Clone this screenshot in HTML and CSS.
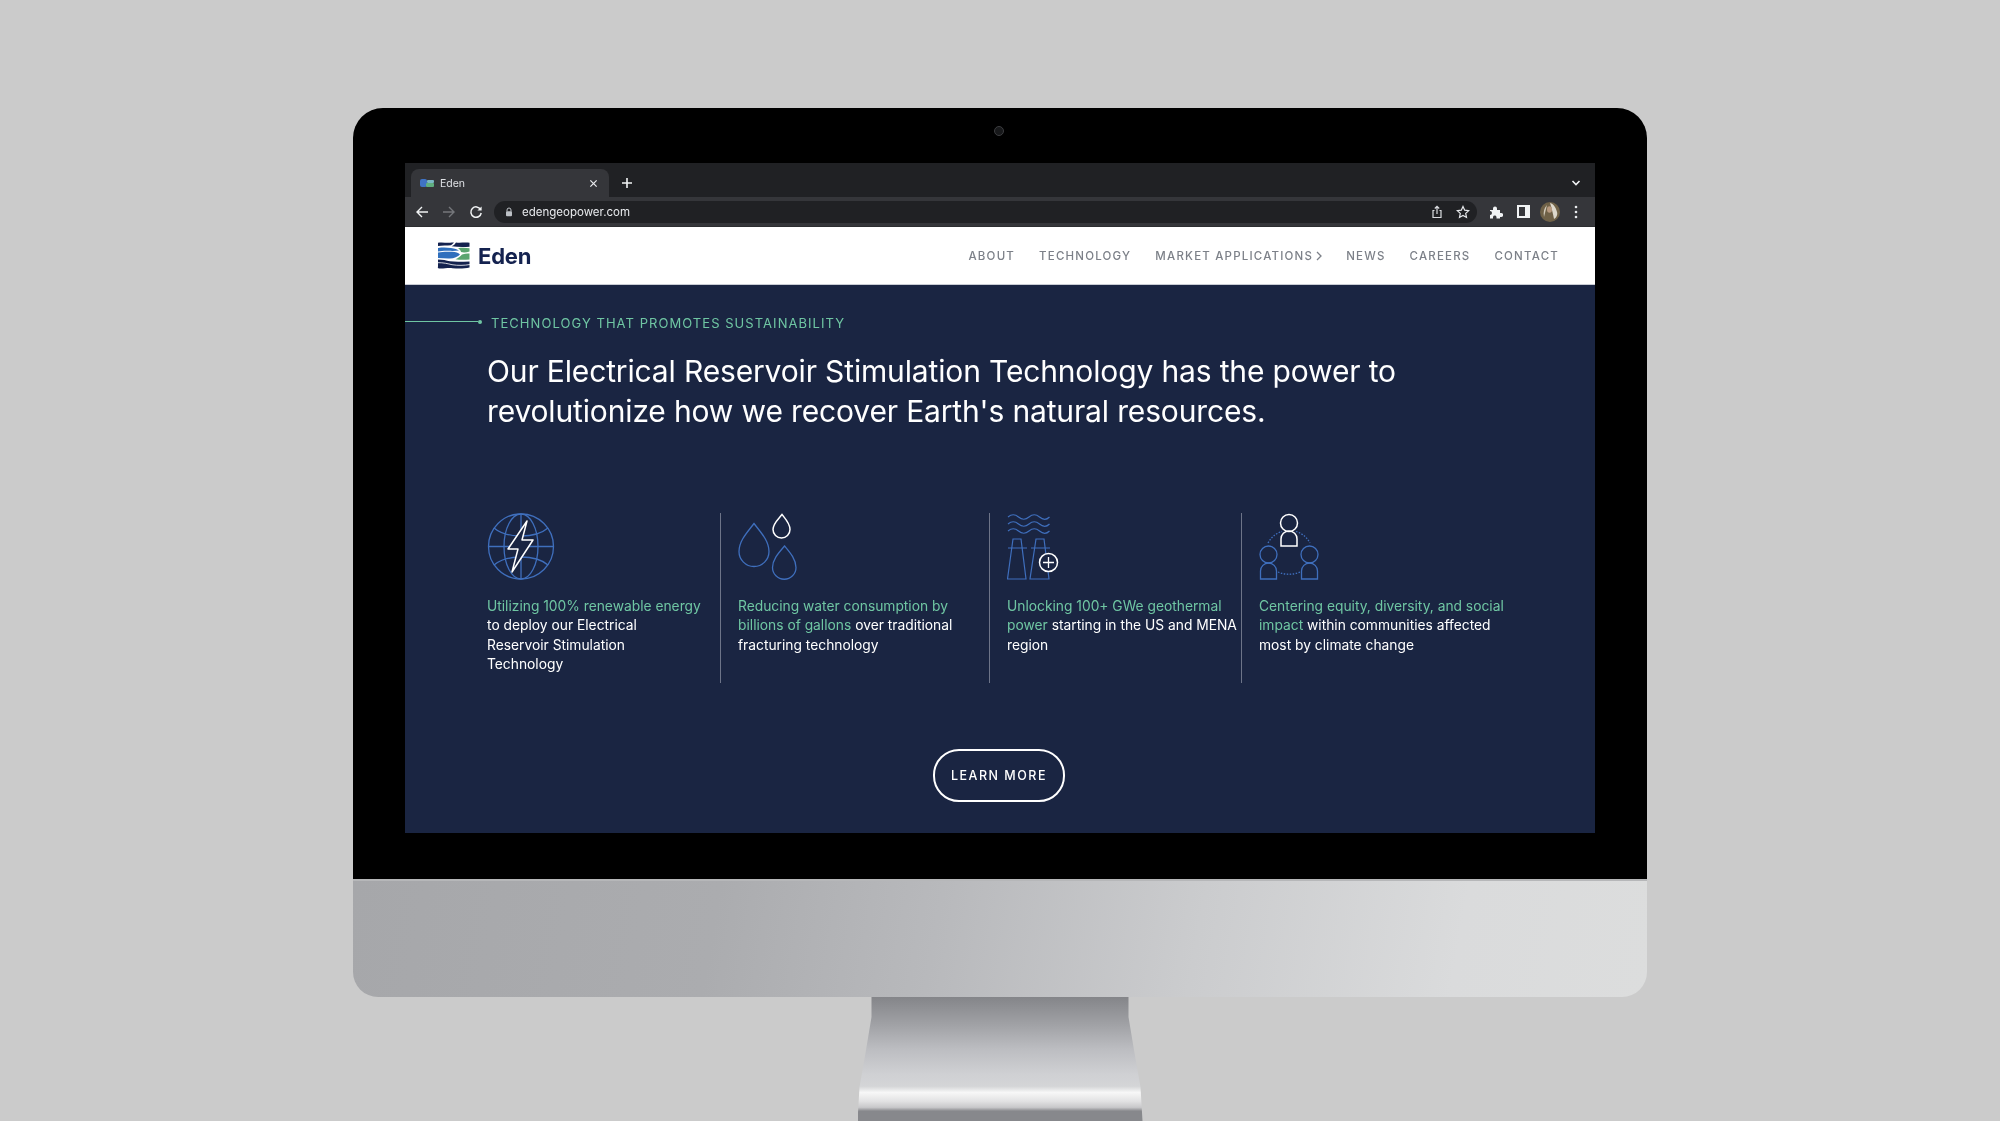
FILE: index.html
```html
<!DOCTYPE html>
<html lang="en">
<head>
<meta charset="utf-8">
<title>Eden</title>
<link rel="stylesheet" href="styles.css">
</head>
<body>
<div class="monitor">
  <div class="bezel">
    <div class="camera"></div>
    <div class="screen">
      <div class="tabstrip">
        <div class="tab">
          <svg class="favicon" viewBox="0 0 14 10"><rect x="0" y="1" width="7" height="8" rx="2" fill="#3f73c4"/><rect x="7" y="2" width="7" height="3" rx="1" fill="#7ab8c4"/><rect x="6" y="5" width="8" height="4" rx="1" fill="#5fae7f"/></svg>
          <span class="tab-title">Eden</span>
          <svg class="tab-close" viewBox="0 0 10 10"><path d="M1.5 1.5l7 7M8.5 1.5l-7 7" stroke="#e8eaed" stroke-width="1.4" fill="none"/></svg>
        </div>
        <svg class="newtab" viewBox="0 0 12 12"><path d="M6 1v10M1 6h10" stroke="#f1f3f4" stroke-width="1.6" fill="none"/></svg>
        <svg class="tabchev" viewBox="0 0 10 8"><path d="M1.5 2l3.5 3.5L8.5 2" stroke="#f1f3f4" stroke-width="1.6" fill="none"/></svg>
      </div>
      <div class="toolbar">
        <svg class="tb back" viewBox="0 0 14 14"><path d="M13 7H2M7 2L2 7l5 5" stroke="#f1f3f4" stroke-width="1.4" fill="none"/></svg>
        <svg class="tb fwd" viewBox="0 0 14 14"><path d="M1 7h11M7 2l5 5-5 5" stroke="#75777b" stroke-width="1.4" fill="none"/></svg>
        <svg class="tb reload" viewBox="0 0 14 14"><path d="M11.6 4.5A5.2 5.2 0 1 0 12.2 8" stroke="#f1f3f4" stroke-width="1.5" fill="none"/><path d="M12.6 1.4v4.2H8.4z" fill="#f1f3f4"/></svg>
        <div class="omnibox">
          <svg class="lock" viewBox="0 0 8 10"><path d="M2 4.5V3a2 2 0 0 1 4 0v1.500" stroke="#bdc1c6" fill="none"/><rect x="1" y="4.300" width="6" height="5" rx="1" fill="#bdc1c6"/></svg>
          <span class="url">edengeopower.com</span>
          <svg class="omni-share" viewBox="0 0 12 14"><path d="M3.500 5.500H2v7h8v-7H8.500M6 9V1.500M3.800 3.500L6 1.300l2.200 2.200" stroke="#dadce0" stroke-width="1.200" fill="none"/></svg>
          <svg class="omni-star" viewBox="0 0 14 14"><path d="M7 1.500l1.700 3.700 4 .5-3 2.700.8 4L7 10.400 3.500 12.400l.8-4-3-2.700 4-.5z" stroke="#e8eaed" stroke-width="1.200" fill="none"/></svg>
        </div>
        <svg class="ext" viewBox="0 0 14 14"><path d="M1 5h3V3.500a2 2 0 0 1 4 0V5h3v3h1.200a2 2 0 0 1 0 4H11v1.500H7.500V12a1.800 1.800 0 0 0-3.500 0v1.500H1V10a2 2 0 0 0 0-4z" fill="#f1f3f4"/></svg>
        <div class="sidepanel"></div>
        <svg class="avatar" viewBox="0 0 20 20"><circle cx="10" cy="10" r="10" fill="#6f6147"/><path d="M10 1c4 1 6 5 7 9 1 3-1 6-3 7-1-5-2-10-4-16z" fill="#ddd8cc"/><path d="M7 3C4 6 3 10 4 15c1-4 2-8 3-12z" fill="#cfc8b8"/><ellipse cx="9.500" cy="7.500" rx="2.500" ry="3.200" fill="#b89a80"/></svg>
        <svg class="dots" viewBox="0 0 4 14"><circle cx="2" cy="2" r="1.300" fill="#e8eaed"/><circle cx="2" cy="7" r="1.300" fill="#e8eaed"/><circle cx="2" cy="12" r="1.300" fill="#e8eaed"/></svg>
      </div>
      <header class="site-nav">
        <a class="logo">
          <svg class="logo-mark" viewBox="0 0 33 27">
            <path d="M1 .8C5 .2 9 1 13 .8c2-.2 3-.5 4-.2-1 1.300-2 2-3 2.700C10 3.800 5 3.500 1 4z" fill="#14224f"/>
            <path d="M19 .5c4 .5 9-.3 13.500.2v4C27 5.200 21 5.200 14.500 4.300 17 3.500 18 2 19 .5z" fill="#14224f"/>
            <path d="M1 6c5-.8 9-.5 13 0 4 .5 6 1.300 8 2.500-3 .4-7 .5-10 .3C8 8.500 5 8.800 1 9.500z" fill="#2f6fbd"/>
            <path d="M1 10.500c5-1 9-1 14-.7 4 .2 6 1 8 2.700-2 2.300-6 4-10 4-4 .3-8-.5-12-.5z" fill="#2f6fbd"/>
            <path d="M21 6.200c4-.8 8-.5 11.500 0v3.300c-3 1-6 1.300-8.500.5 0-1.500-1.500-2.800-3-3.800z" fill="#5aa56f"/>
            <path d="M25 12.500c3-1 5.500-1.300 7.500-1v6c-5 .5-10 .5-14-.2 3-1.300 5-3 6.500-4.800z" fill="#5aa56f"/>
            <path d="M1 17.500c5 0 8 1 12 1.800 6 .8 13 .3 19.500.2v6c-5 1.200-11 1.300-17 .7C10 25.700 6 27 2 26.500 1 26.300.5 25.500 1 24.500z" fill="#14224f"/>
            <path d="M1 20.700c5-.2 10 1 14 2 6 1 12 .8 18-.2" stroke="#fff" stroke-width=".8" fill="none"/>
          </svg>
          <span class="logo-text">Eden</span>
        </a>
        <nav class="nav-links">
          <a>ABOUT</a>
          <a>TECHNOLOGY</a>
          <a class="has-chev">MARKET APPLICATIONS<svg class="nav-chev" viewBox="0 0 6 10"><path d="M1 1l4 4-4 4" stroke="#7c8088" stroke-width="1.300" fill="none"/></svg></a>
          <a>NEWS</a>
          <a>CAREERS</a>
          <a>CONTACT</a>
        </nav>
      </header>
      <main class="page">
        <div class="eyebrow"><span class="eyebrow-line"></span><span class="eyebrow-dot"></span><span class="eyebrow-text">TECHNOLOGY THAT PROMOTES SUSTAINABILITY</span></div>
        <h1 class="hero">Our Electrical Reservoir Stimulation Technology has the power to<br>revolutionize how we recover Earth's natural resources.</h1>
        <section class="features">
          <article class="feature f1">
            <svg class="icon" width="68" height="67" viewBox="0 0 68 67" fill="none" stroke="#3f6fbd" stroke-width="1.300">
              <circle cx="34" cy="33.500" r="32.500"/>
              <ellipse cx="34" cy="33.500" rx="17" ry="32.500"/>
              <path d="M34 1v65M1.500 33.500h65"/>
              <path d="M7 15c7 6 17 8 27 8s20-2 27-8M7 52c7-6 17-8 27-8s20 2 27 8"/>
              <path d="M40 8L21 36h10L25 59 46 27H35z" fill="#1a2542" stroke="#fff" stroke-width="1.500" stroke-linejoin="round"/>
            </svg>
            <p class="feature-text"><em>Utilizing 100% renewable energy</em><br>to deploy our Electrical<br>Reservoir Stimulation<br>Technology</p>
          </article>
          <article class="feature f2">
            <svg class="icon" width="62" height="67" viewBox="0 0 62 67" fill="none" stroke="#3f6fbd" stroke-width="1.300">
              <path d="M44 1.500c4 5 8 9 8 15a8.500 8.500 0 0 1-17 0c0-6 5-10 9-15z" stroke="#fff" stroke-width="1.500"/>
              <path d="M16 10.500c6 8 15 17 15 28a15 15 0 0 1-30 0c0-11 9-20 15-28z"/>
              <path d="M46.500 33c5 6 11.500 13 11.500 21.500a11.700 11.700 0 0 1-23.500 0C34.500 46 41.500 39 46.500 33z"/>
            </svg>
            <p class="feature-text"><em>Reducing water consumption by<br>billions of gallons</em> over traditional<br>fracturing technology</p>
          </article>
          <article class="feature f3">
            <svg class="icon" width="60" height="67" viewBox="0 0 60 67" fill="none" stroke="#3f6fbd" stroke-width="1.200">
              <path d="M1 4c3.500-3 7-3 10.500 0s7 3 10.500 0 7-3 10.500 0 7 3 10 0M1 11c3.500-3 7-3 10.500 0s7 3 10.500 0 7-3 10.500 0 7 3 10 0M1 18c3.500-3 7-3 10.500 0s7 3 10.500 0 7-3 10.500 0 7 3 10 0"/>
              <path d="M6 26h8l5 40H0.500zM29 26h8l5 40H23zM1 35h19M24 35h19"/>
              <circle cx="41.500" cy="49.500" r="9" fill="#1a2542" stroke="#fff" stroke-width="1.500"/>
              <path d="M41.500 44v11M36 49.500h11" stroke="#fff" stroke-width="1.300"/>
            </svg>
            <p class="feature-text"><em>Unlocking 100+ GWe geothermal<br>power</em> starting in the US and MENA<br>region</p>
          </article>
          <article class="feature f4">
            <svg class="icon" width="60" height="67" viewBox="0 0 60 67" fill="none" stroke="#3f6fbd" stroke-width="1.300">
              <path d="M9 30C13 23 18 20 23 18.500M37 18.500C42 20 47 23 51 30M19 59c7 3 15 3 22 0" stroke-dasharray="1.500 1.500"/>
              <circle cx="30" cy="10" r="8.500" stroke="#fff" stroke-width="1.500"/>
              <path d="M22 33V26a8 8 0 0 1 16 0v7z" stroke="#fff" stroke-width="1.500"/>
              <circle cx="9.500" cy="41.500" r="8.500"/>
              <path d="M1.500 66V58a8 8 0 0 1 16 0v8z"/>
              <circle cx="50.500" cy="41.500" r="8.500"/>
              <path d="M42.500 66V58a8 8 0 0 1 16 0v8z"/>
            </svg>
            <p class="feature-text"><em>Centering equity, diversity, and social<br>impact</em> within communities affected<br>most by climate change</p>
          </article>
        </section>
        <div class="cta-row"><a class="cta">LEARN MORE</a></div>
      </main>
    </div>
  </div>
  <div class="chin"></div>
  <div class="stand"></div>
</div>
</body>
</html>
```

FILE: styles.css
```css
* { box-sizing: border-box; }
html, body { margin: 0; height: 1121px; overflow: hidden; }
body { background: #cbcbcb; font-family: Inter, "Liberation Sans", sans-serif; padding-top: 108px; }

.monitor { width: 1294px; margin: 0 auto; display: flex; flex-direction: column; }
.bezel { position: relative; background: #000; border-radius: 30px 30px 0 0; padding: 55px 52px 46px 52px; }
.camera { position: absolute; top: 18px; left: 641px; width: 10px; height: 10px; border-radius: 50%; background: #17181a; border: 1px solid #3c3d40; }
.screen { display: flex; flex-direction: column; height: 670px; filter: blur(0.35px); }

.tabstrip { height: 34px; background: #202124; display: flex; align-items: flex-end; position: relative; padding-left: 6px; }
.tab { width: 198px; height: 28px; background: #35363a; border-radius: 8px 8px 0 0; display: flex; align-items: center; padding: 0 11px 0 9px; }
.favicon { width: 14px; height: 10px; }
.tab-title { margin-left: 6px; color: #dfe1e5; font-size: 10.5px; flex: 1; }
.tab-close { width: 9px; height: 9px; }
.newtab { width: 12px; height: 12px; margin: 0 0 8px 12px; }
.tabchev { width: 10px; height: 8px; margin: 0 14px 10px auto; }

.toolbar { height: 30px; background: #35363a; display: flex; align-items: center; padding-left: 10px; border-bottom: 1px solid #2c2d30; }
.tb { width: 14px; height: 14px; flex: none; }
.fwd { margin-left: 13px; }
.reload { margin-left: 13px; }
.omnibox { width: 983px; height: 22px; margin-left: 11px; background: #202124; border-radius: 11px; display: flex; align-items: center; padding: 0 7px 0 11px; }
.lock { width: 8px; height: 10px; }
.url { margin-left: 9px; color: #e8eaed; font-size: 11.5px; flex: 1; }
.omni-share { width: 12px; height: 14px; }
.omni-star { width: 14px; height: 14px; margin-left: 13px; }
.ext { width: 14px; height: 14px; margin-left: 12px; }
.sidepanel { width: 13px; height: 13px; margin-left: 14px; background: #35363a; border: 2px solid #f1f3f4; border-right-width: 5px; background-clip: padding-box; }
.avatar { width: 20px; height: 20px; margin-left: 10px; }
.dots { width: 4px; height: 14px; margin-left: 14px; }

.site-nav { height: 58px; background: #fff; border-bottom: 1px solid #c9ccd4; display: flex; align-items: center; justify-content: space-between; padding: 0 36px 0 32px; }
.logo { display: flex; align-items: center; gap: 8px; }
.logo-mark { width: 33px; height: 27px; }
.logo-text { font-weight: 700; font-size: 22px; color: #14224f; letter-spacing: -0.2px; }
.nav-links { display: flex; gap: 24px; color: #7c8088; font-size: 11.5px; font-weight: 500; letter-spacing: 1.2px; }
.has-chev { display: flex; align-items: center; gap: 3px; }
.nav-chev { width: 6px; height: 10px; }

.page { flex: 1; background: #1a2542; position: relative; }
.eyebrow { display: flex; align-items: center; height: 16px; margin-top: 30px; color: #6fc6a3; }
.eyebrow-line { width: 73px; height: 1px; background: #6fc6a3; margin-top: -3px; }
.eyebrow-dot { width: 4px; height: 4px; border-radius: 50%; background: #6fc6a3; margin-top: -3px; }
.eyebrow-text { margin-left: 9px; font-size: 13px; letter-spacing: 1.05px; }
.hero { margin: 20px 0 0 82px; color: #fff; font-size: 30px; font-weight: 400; line-height: 40px; white-space: nowrap; letter-spacing: -0.15px; }

.features { display: grid; grid-template-columns: 233.5px 269px 252px 1fr; margin: 82px 0 0 82px; height: 170px; }
.feature { padding-left: 17.5px; border-right: 1px solid #6d7488; white-space: nowrap; }
.f1 { padding-left: 0; }
.f4 { border-right: 0; }
.icon { display: block; }
.feature-text { margin: 17px 0 0; color: #fff; font-size: 13.8px; line-height: 19.300px; }
.feature-text em { font-style: normal; color: #6fc6a3; }

.cta-row { display: flex; justify-content: center; margin: 66px 2px 0 0; }
.cta { width: 132px; height: 53px; border: 2px solid #fff; border-radius: 26px; color: #fff; font-size: 12.500px; font-weight: 500; letter-spacing: 1.500px; display: flex; align-items: center; justify-content: center; }

.chin { height: 118px; border-top: 2px solid #b6b7b9; border-radius: 0 0 25px 25px; background: linear-gradient(100deg, #a6a7aa 0%, #abacaf 28%, #b8b9bc 45%, #cbccce 65%, #dadbdc 85%, #dcdddd 100%); }
.stand { width: 285px; height: 124px; margin: 0 auto; clip-path: polygon(14px 0, 271px 0, 271px 20px, 277px 56px, 283px 90px, 285px 124px, 0 124px, 2px 90px, 8px 56px, 14px 20px); background: linear-gradient(180deg, #848589 0%, #a0a1a5 22%, #bcbdc1 42%, #cfd0d3 62%, #d4d5d7 72%, #f7f7f7 77%, #e2e2e3 84%, #c8c8ca 89%, #87888c 92%, #87888c 100%); }
```
